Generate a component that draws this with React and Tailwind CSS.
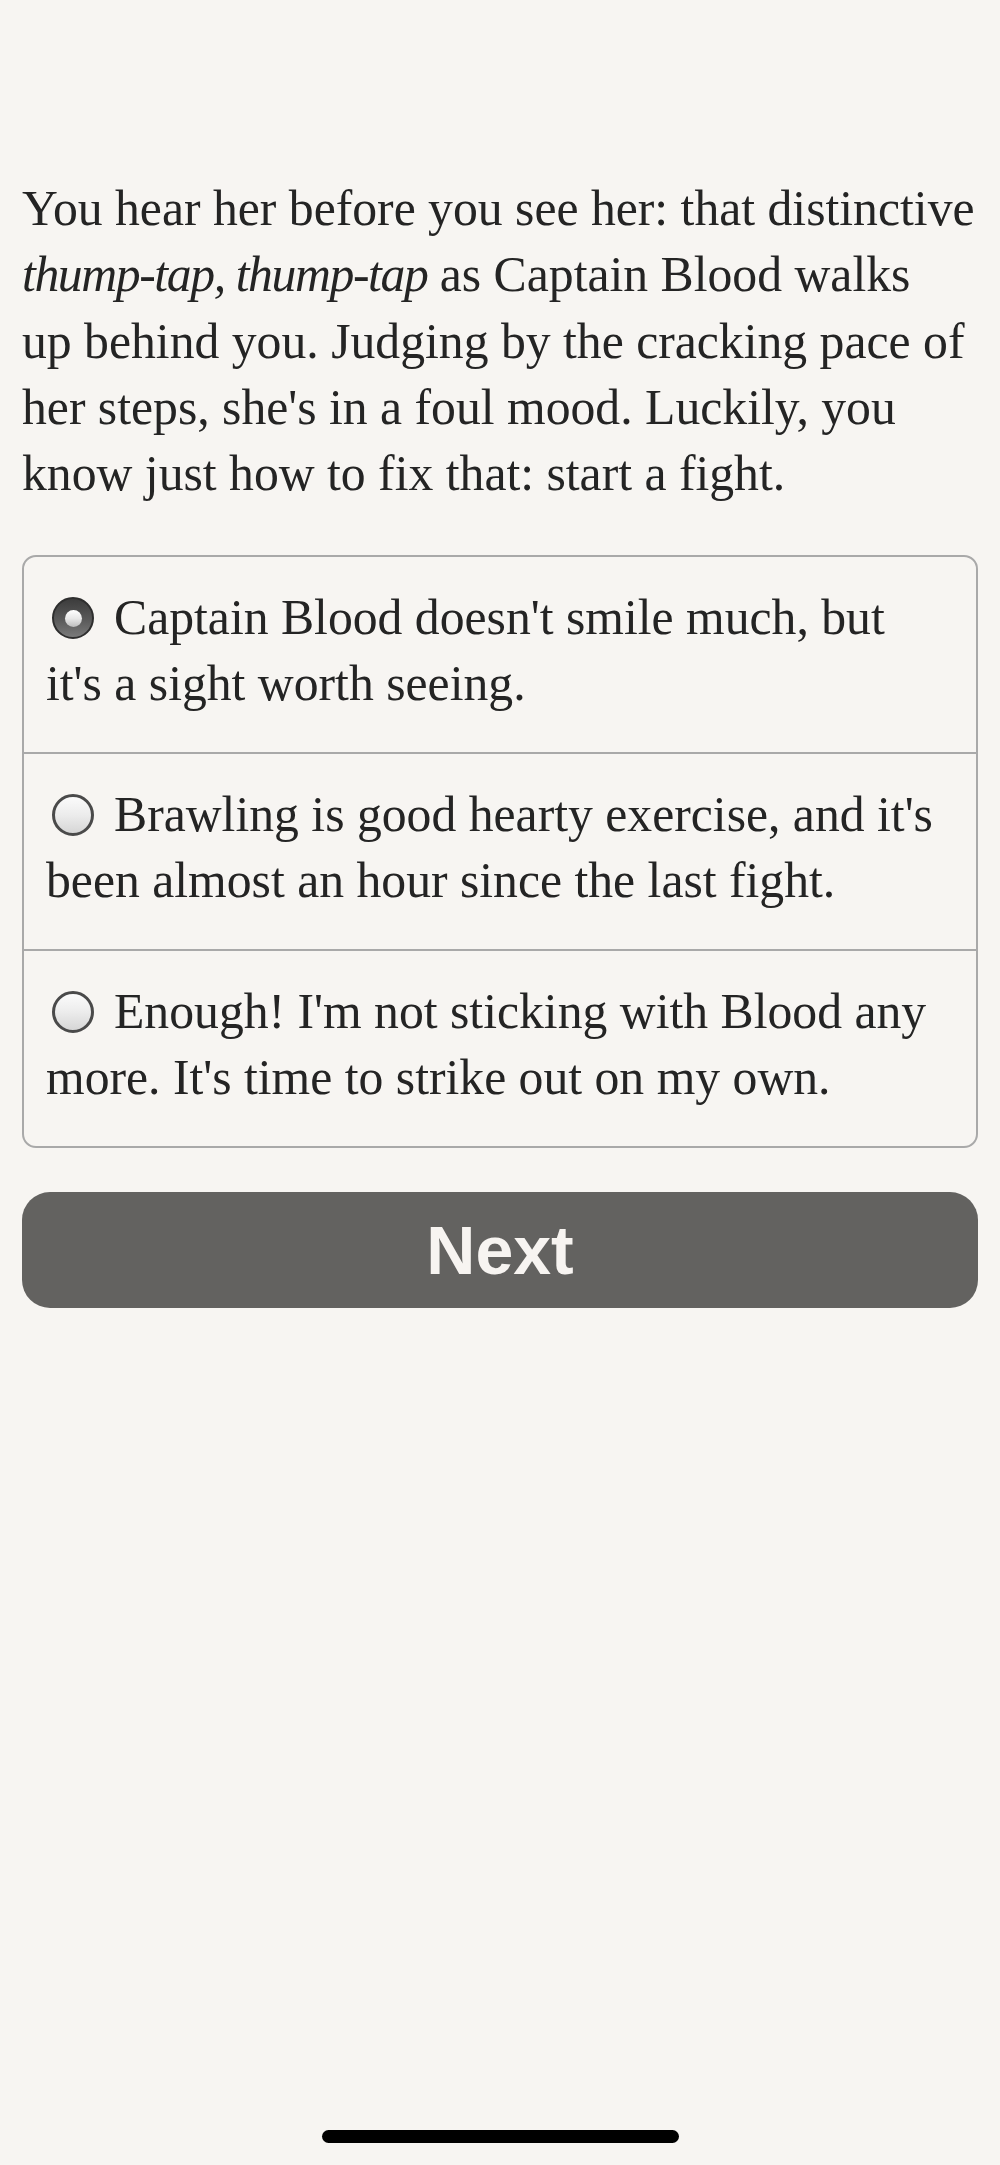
import React from "react";

const serif = { fontFamily: '"Liberation Serif", "DejaVu Serif", serif' };

function Radio({ checked }) {
  if (checked) {
    return (
      <span className="inline-flex items-center justify-center w-[42px] h-[42px] rounded-full align-middle border-[2px] border-[#2e2e2e] bg-[linear-gradient(180deg,#3c3c3c_0%,#5a5a5a_55%,#7a7a7a_100%)] mr-[20px] ml-[6px] relative top-[-5px]">
        <span className="block w-[17px] h-[17px] rounded-full bg-[linear-gradient(180deg,#ffffff_0%,#e8e8e8_50%,#bdbdbd_100%)]" />
      </span>
    );
  }
  return (
    <span className="inline-block w-[42px] h-[42px] rounded-full align-middle border-[3px] border-[#4a4a4a] bg-[linear-gradient(180deg,#fbfbfb_0%,#ececec_50%,#d6d6d6_100%)] mr-[20px] ml-[6px] relative top-[-5px]" />
  );
}

function Choice({ checked, lines, last }) {
  return (
    <div
      className={
        "pl-[22px] pr-[16px] pt-[28px] pb-[35px] text-[49.7px] leading-[66px] text-[#242424] " +
        (last ? "" : "border-b-[2px] border-[#a9a9a9]")
      }
      style={serif}
    >
      <div className="whitespace-nowrap">
        <Radio checked={checked} />
        {lines[0]}
      </div>
      <div className="whitespace-nowrap">{lines[1]}</div>
    </div>
  );
}

export default function App() {
  return (
    <div className="min-h-[2165px] w-[1000px] bg-[#f7f5f2] flex flex-col">
      <div className="px-[22px] pt-[176px]">
        <div className="text-[49.7px] leading-[66.3px] text-[#242424]" style={serif}>
          <div className="whitespace-nowrap">You hear her before you see her: that distinctive</div>
          <div className="whitespace-nowrap">
            <em className="tracking-[-1.4px]">thump-tap, thump-tap</em> as Captain Blood walks
          </div>
          <div className="whitespace-nowrap">up behind you. Judging by the cracking pace of</div>
          <div className="whitespace-nowrap">her steps, she's in a foul mood. Luckily, you</div>
          <div className="whitespace-nowrap">know just how to fix that: start a fight.</div>
        </div>

        <div className="mt-[48px] border-[2px] border-[#a9a9a9] rounded-[14px] overflow-hidden">
          <Choice
            checked
            lines={["Captain Blood doesn't smile much, but", "it's a sight worth seeing."]}
          />
          <Choice
            lines={["Brawling is good hearty exercise, and it's", "been almost an hour since the last fight."]}
          />
          <Choice
            last
            lines={["Enough! I'm not sticking with Blood any", "more. It's time to strike out on my own."]}
          />
        </div>

        <button
          className="mt-[44px] w-full h-[116px] rounded-[28px] bg-[#636260] text-[#f7f4f1] text-[68px] font-bold flex items-center justify-center"
          style={{ fontFamily: '"Liberation Sans", Arial, sans-serif' }}
        >
          Next
        </button>
      </div>

      <div className="flex-1" />
      <div className="flex justify-center pb-[22px]">
        <div className="w-[357px] h-[13px] rounded-full bg-black" />
      </div>
    </div>
  );
}
